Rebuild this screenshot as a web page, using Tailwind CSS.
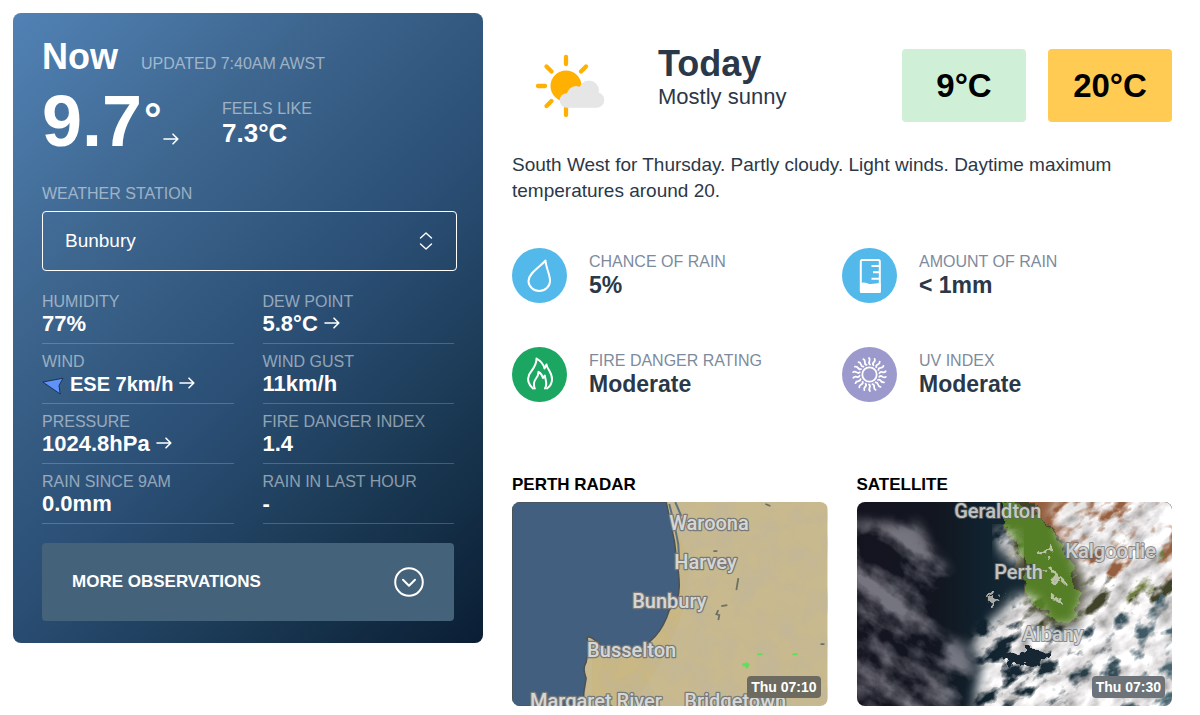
<!DOCTYPE html>
<html lang="en">
<head>
    <meta charset="UTF-8">
    <meta name="viewport" content="width=device-width, initial-scale=1.0">
    <title>Bunbury Weather</title>
    <script src="https://cdn.jsdelivr.net/npm/@tailwindcss/browser@4"></script>
</head>
<body class="bg-white font-['Liberation_Sans',Arial,sans-serif] text-[#2b3848]">
    <!-- Shared icons -->
    <svg class="hidden">
        <symbol id="steady" viewBox="0 0 16 12">
            <path d="M1 6h13.5M10 1.2L14.8 6L10 10.8" fill="none" stroke="currentColor" stroke-width="1.6" stroke-linecap="round" stroke-linejoin="round"/>
        </symbol>
    </svg>

    <main class="grid grid-cols-[470fr_660fr] items-start gap-[29px] pt-[13px] pl-[13px] pr-7">
        <!-- Current conditions -->
        <section class="rounded-lg bg-[linear-gradient(135deg,#5182b5_0%,#3c648c_30%,#2a4e74_55%,#1b3a55_75%,#0a1e33_100%)] px-[29px] pt-6 pb-[22px] text-white">
            <div class="flex items-baseline gap-[23px]">
                <h2 class="text-[36px] leading-10 font-bold">Now</h2>
                <p class="text-base leading-5 text-white/50">UPDATED 7:40AM AWST</p>
            </div>

            <div class="mt-2 flex items-center">
                <div class="flex w-[180px]">
                    <span class="text-[72px] leading-[72px] font-bold">9.7</span>
                    <span class="ml-0.5 text-[44px] leading-[68px] font-bold">°</span>
                    <svg class="mb-3 h-3 w-[18px] self-end"><use href="#steady"/></svg>
                </div>
                <div class="pt-1">
                    <p class="text-base leading-5 text-white/50">FEELS LIKE</p>
                    <p class="text-[26px] leading-7 font-bold">7.3°C</p>
                </div>
            </div>

            <label for="station" class="mt-[27px] block text-base leading-5 text-white/50">WEATHER STATION</label>
            <div class="relative mt-[7px] -mr-[3px]">
                <select id="station" class="h-[60px] w-full appearance-none rounded border border-white bg-transparent px-[22px] text-[19px] text-white">
                    <option>Bunbury</option>
                </select>
                <svg class="pointer-events-none absolute top-[21px] right-6 h-[18px] w-[14px]" viewBox="0 0 14 18" fill="none" stroke="white" stroke-width="1.4" stroke-linecap="round" stroke-linejoin="round">
                    <path d="M1.5 6L7 1L12.5 6M1.5 12L7 17L12.5 12"/>
                </svg>
            </div>

            <dl class="mt-[13px] grid grid-cols-2 gap-x-[29px]">
                <div class="border-b border-white/20 pt-2 pb-[7px]">
                    <dt class="text-base leading-5 text-white/50">HUMIDITY</dt>
                    <dd class="text-[22px] leading-6 font-bold">77%</dd>
                </div>
                <div class="border-b border-white/20 pt-2 pb-[7px]">
                    <dt class="text-base leading-5 text-white/50">DEW POINT</dt>
                    <dd class="flex items-center gap-1.5 text-[22px] leading-6 font-bold">5.8°C <svg class="mb-0.5 h-3 w-4"><use href="#steady"/></svg></dd>
                </div>
                <div class="border-b border-white/20 pt-2 pb-[7px]">
                    <dt class="text-base leading-5 text-white/50">WIND</dt>
                    <dd class="flex items-center gap-1.5 text-[20px] leading-6 font-bold">
                        <svg class="mt-1 h-[18px] w-[22px]" viewBox="0 0 22 18"><path d="M0.8 5L21 1.2L17 8.5L18.2 17Z" fill="#5f92fb" stroke="#1d3350" stroke-width="1"/></svg>
                        ESE 7km/h
                        <svg class="mb-0.5 h-3 w-4"><use href="#steady"/></svg>
                    </dd>
                </div>
                <div class="border-b border-white/20 pt-2 pb-[7px]">
                    <dt class="text-base leading-5 text-white/50">WIND GUST</dt>
                    <dd class="text-[22px] leading-6 font-bold">11km/h</dd>
                </div>
                <div class="border-b border-white/20 pt-2 pb-[7px]">
                    <dt class="text-base leading-5 text-white/50">PRESSURE</dt>
                    <dd class="flex items-center gap-1.5 text-[22px] leading-6 font-bold">1024.8hPa <svg class="mb-0.5 h-3 w-4"><use href="#steady"/></svg></dd>
                </div>
                <div class="border-b border-white/20 pt-2 pb-[7px]">
                    <dt class="text-base leading-5 text-white/50">FIRE DANGER INDEX</dt>
                    <dd class="text-[22px] leading-6 font-bold">1.4</dd>
                </div>
                <div class="border-b border-white/20 pt-2 pb-[7px]">
                    <dt class="text-base leading-5 text-white/50">RAIN SINCE 9AM</dt>
                    <dd class="text-[22px] leading-6 font-bold">0.0mm</dd>
                </div>
                <div class="border-b border-white/20 pt-2 pb-[7px]">
                    <dt class="text-base leading-5 text-white/50">RAIN IN LAST HOUR</dt>
                    <dd class="text-[22px] leading-6 font-bold">-</dd>
                </div>
            </dl>

            <button class="mt-[19px] flex h-[78px] w-full items-center justify-between rounded bg-[#45627b] px-[30px] text-[17px] font-bold">
                MORE OBSERVATIONS
                <svg class="size-[30px]" viewBox="0 0 30 30" fill="none" stroke="white" stroke-width="2" stroke-linecap="round" stroke-linejoin="round">
                    <circle cx="15" cy="15" r="13.8"/>
                    <path d="M9 12.8L15 18.8L21 12.8"/>
                </svg>
            </button>
        </section>

        <!-- Forecast -->
        <section class="pt-[31px]">
            <div class="flex items-start">
                <svg class="mt-[9px] ml-[22px] h-[66px] w-[72px]" viewBox="0 0 72 66">
                    <path d="M32 4v7M32 55v7M4 33h7M12.500 13.500l5 5M52 13.500l-5 5M12.500 53l5-5" stroke="#ffb000" stroke-width="4.300" stroke-linecap="round"/>
                    <circle cx="32" cy="33" r="15.5" fill="#ffb000"/>
                    <g fill="#e6e6e6">
                        <circle cx="33" cy="47.500" r="7.300"/>
                        <circle cx="42" cy="42" r="9"/>
                        <circle cx="55" cy="37.500" r="10"/>
                        <circle cx="62.500" cy="47" r="7.800"/>
                        <rect x="33" y="40" width="29.500" height="14.800"/>
                    </g>
                </svg>
                <div class="ml-[52px]">
                    <h2 class="text-[36px] leading-10 font-bold">Today</h2>
                    <p class="text-[22px] leading-[26px]">Mostly sunny</p>
                </div>
                <div class="mt-[5px] ml-auto flex gap-[22px] text-[33px] font-bold text-black">
                    <div class="flex h-[73px] w-[124px] items-center justify-center rounded bg-[#cff0d6]">9°C</div>
                    <div class="flex h-[73px] w-[124px] items-center justify-center rounded bg-[#ffcb52]">20°C</div>
                </div>
            </div>

            <p class="mt-[30px] text-[19px] leading-[26px]">South West for Thursday. Partly cloudy. Light winds. Daytime maximum temperatures around 20.</p>

            <dl class="mt-11 grid grid-cols-2 gap-y-11">
                <div class="flex items-center gap-[22px]">
                    <svg class="size-[55px] shrink-0" viewBox="0 0 55 55" fill="none" stroke="white" stroke-width="2" stroke-linejoin="round">
                        <circle cx="27.500" cy="27.500" r="27.500" fill="#53b8ea" stroke="none"/>
                        <path d="M33.500 12.500C28 19 16.500 25 16.500 33A10.500 9.800 0 0 0 38 33C38.200 27 34 20 33.500 12.500Z"/>
                    </svg>
                    <div>
                        <dt class="text-base leading-[18px] text-[#7d8b9c]">CHANCE OF RAIN</dt>
                        <dd class="text-[23px] leading-7 font-bold">5%</dd>
                    </div>
                </div>
                <div class="flex items-center gap-[22px]">
                    <svg class="size-[55px] shrink-0" viewBox="0 0 55 55" fill="none" stroke="white" stroke-width="2" stroke-linejoin="round">
                        <circle cx="27.500" cy="27.500" r="27.500" fill="#53b8ea" stroke="none"/>
                        <rect x="18.800" y="12" width="19" height="32" rx="1.500"/>
                        <path d="M29.500 18h8M31 24.300h6.500M29.500 30.800h8"/>
                        <path d="M19 36c4-2 6 1 10 1s5-1 8.800-1v8h-18.800z" fill="white"/>
                    </svg>
                    <div>
                        <dt class="text-base leading-[18px] text-[#7d8b9c]">AMOUNT OF RAIN</dt>
                        <dd class="text-[23px] leading-7 font-bold">&lt; 1mm</dd>
                    </div>
                </div>
                <div class="flex items-center gap-[22px]">
                    <svg class="size-[55px] shrink-0" viewBox="0 0 55 55" fill="none" stroke="white" stroke-width="2" stroke-linejoin="round" stroke-linecap="round">
                        <circle cx="27.500" cy="27.500" r="27.500" fill="#1ba761" stroke="none"/>
                        <path d="M21 41.500C17 38 15 33 17 28C19 23.500 25 19 24.500 11.500C29 14 31.500 17 32.500 21.500L34.500 17.500C35 22 40 25 40 32C40 36 38 39.500 35 41.500"/>
                        <path d="M22.800 41.500C21 37 22 34 24 31.500C26 29 26.500 27 26.500 24.800C29.500 26.500 30.500 29 31 31L32.800 28.500C33 31.500 36 37 33 41.500"/>
                    </svg>
                    <div>
                        <dt class="text-base leading-[18px] text-[#7d8b9c]">FIRE DANGER RATING</dt>
                        <dd class="text-[23px] leading-7 font-bold">Moderate</dd>
                    </div>
                </div>
                <div class="flex items-center gap-[22px]">
                    <svg class="size-[55px] shrink-0" viewBox="0 0 55 55" fill="none" stroke="white" stroke-width="1.800" stroke-linecap="round">
                        <circle cx="27.500" cy="27.500" r="27.500" fill="#9c9acd" stroke="none"/>
                        <circle cx="27.500" cy="27.500" r="7.200"/>
                        <g id="uv-rays"></g>
                    </svg>
                    <div>
                        <dt class="text-base leading-[18px] text-[#7d8b9c]">UV INDEX</dt>
                        <dd class="text-[23px] leading-7 font-bold">Moderate</dd>
                    </div>
                </div>
            </dl>

            <!-- Maps -->
            <div class="mt-[71px] grid grid-cols-2 gap-[29px]">
                <a href="#" class="block">
                    <h3 class="text-[17px] leading-6 font-bold text-black">PERTH RADAR</h3>
                    <div class="relative mt-[5px] overflow-hidden rounded-lg">
                        <svg class="block w-full" viewBox="0 0 315 204">
                            <defs>
                                <filter id="terrain" x="0" y="0" width="100%" height="100%">
                                    <feTurbulence type="fractalNoise" baseFrequency="0.045" numOctaves="4" seed="4"/>
                                    <feColorMatrix values="0 0 0 0 0.50  0 0 0 0 0.46  0 0 0 0 0.36  3 0 0 0 -1.300"/>
                                </filter>
                            </defs>
                            <rect width="315" height="204" fill="#c8b98f"/>
                            <path d="M166 30Q180 60 172 100T120 204H80V155L140 150Z" fill="#c9b57d" opacity="0.6"/>
                            <rect x="70" width="245" height="204" filter="url(#terrain)" opacity="0.4"/>
                            <path d="M154 0Q157 14 159 24Q163 40 164 55Q167 72 167 84Q167 100 157 108Q152 124 143 134Q132 146 121 149Q98 152 85 140Q79 134 75 135Q77 148 74 160Q70 166 74 176Q71 190 71 204H0V0Z" fill="#425f80" stroke="#4d5153" stroke-width="1.500"/>
                            <path d="M157 2L162 22L166 42L167 60M163 0L169 14" fill="none" stroke="#5d7480" stroke-width="2"/>
                            <path d="M226 76L225 82L224 88M209 104l6-1M206 108l-2 4l3 1l-1 5M253 2l5 2M201 49h4M308 142h4" fill="none" stroke="#6d7165" stroke-width="1.800"/>
                            <path d="M230 161h3v-1h2v1h2v3h-1v2h-3v-2h-3zM245 151h5v2h-5zM280 151h5v2h-5z" fill="#5fe05a"/>
                            <g class="font-['Roboto',sans-serif] text-[20px] font-medium" fill="#e4e4e0" fill-opacity="0.9" stroke="#77797a" stroke-width="2.500" paint-order="stroke" stroke-linejoin="round">
                                <text x="157" y="28">Waroona</text>
                                <text x="162" y="67">Harvey</text>
                                <text x="120" y="106">Bunbury</text>
                                <text x="75" y="155">Busselton</text>
                                <text x="18" y="206">Margaret River</text>
                                <text x="172" y="206">Bridgetown</text>
                            </g>
                        </svg>
                        <span class="absolute right-[7px] bottom-2 rounded-sm bg-[#6d6a5f] px-1 text-[14px] leading-[22px] font-bold text-white">Thu 07:10</span>
                    </div>
                </a>
                <a href="#" class="block">
                    <h3 class="text-[17px] leading-6 font-bold text-black">SATELLITE</h3>
                    <div class="relative mt-[5px] overflow-hidden rounded-lg">
                        <svg class="block w-full" viewBox="0 0 315 204">
                            <defs>
                                <linearGradient id="sea">
                                    <stop offset="0" stop-color="#14141f"/>
                                    <stop offset="0.250" stop-color="#12161f"/>
                                    <stop offset="0.400" stop-color="#10222e"/>
                                    <stop offset="0.600" stop-color="#1a2c36"/>
                                    <stop offset="1" stop-color="#4a6874"/>
                                </linearGradient>
                                <filter id="soft"><feGaussianBlur stdDeviation="6"/></filter>
                                <filter id="edge" x="-20%" y="-20%" width="140%" height="140%">
                                    <feTurbulence type="fractalNoise" baseFrequency="0.090" numOctaves="3" seed="8"/>
                                    <feDisplacementMap in="SourceGraphic" scale="20" xChannelSelector="R" yChannelSelector="G"/>
                                </filter>
                                <filter id="cloud" x="0" y="0" width="100%" height="100%">
                                    <feTurbulence type="fractalNoise" baseFrequency="0.038 0.065" numOctaves="6" seed="11"/>
                                    <feColorMatrix values="1.400 0 0 0 0.120  1.400 0 0 0 0.105  1.400 0 0 0 0.105  0 5 0 0 -1.450"/>
                                </filter>
                                <filter id="haze" x="0" y="0" width="100%" height="100%">
                                    <feTurbulence type="fractalNoise" baseFrequency="0.018 0.030" numOctaves="6" seed="5"/>
                                    <feColorMatrix values="0 0 0 0 0.350  0 0 0 0 0.340  0 0 0 0 0.390  0 3.500 0 0 -1.450"/>
                                </filter>
                                <mask id="cloud-area">
                                    <path d="M212 -20H340V230H112L125 160L115 140L160 92L178 96L192 125L218 122L228 85L212 50L192 14Z" fill="white" filter="url(#soft)"/>
                                    <path d="M138 26L160 34L164 62L146 54Z" fill="white" filter="url(#soft)"/>
                                </mask>
                                <mask id="haze-area">
                                    <path d="M0 20L60 20L85 60L110 95L75 120L115 150L118 204V220H-20V20Z" fill="white" filter="url(#soft)"/>
                                </mask>
                            </defs>
                            <rect width="315" height="204" fill="url(#sea)"/>
                            <path d="M146 -20H330V85L270 110L240 118L205 128L165 124L160 105L168 88L155 52L148 20Z" fill="#41422c" filter="url(#edge)"/>
                            <path d="M170 -20H330V75L270 84L232 70L212 44L180 14Z" fill="#96613f" filter="url(#edge)"/>
                            <path d="M142 -6L152 -2L184 18L202 40L218 76L224 98L214 122L194 114L174 98L166 78L174 66L156 44L150 24Z" fill="#557f27" filter="url(#edge)"/>
                            <path d="M270 70L308 50L300 80L260 110Z" fill="#6c7a3c" filter="url(#edge)"/>
                            <g mask="url(#haze-area)" opacity="0.700">
                                <rect x="-80" y="-120" width="440" height="440" transform="rotate(35 60 102)" filter="url(#haze)"/>
                            </g>
                            <g mask="url(#cloud-area)">
                                <rect x="-60" y="-120" width="440" height="440" transform="rotate(-35 157 102)" filter="url(#cloud)"/>
                            </g>
                            <path d="M180 50q10 6 14-4M190 70l16 14M196 92l6 8M132 96l6-6M134 101l4-3" fill="none" stroke="#dcd8cf" stroke-width="4" stroke-linecap="round" opacity="0.750" filter="url(#edge)"/>
                            <path d="M142 152Q170 142 196 150L182 162L150 160Z" fill="#172733" filter="url(#edge)"/>
                            <g class="font-['Roboto',sans-serif] text-[20px] font-medium" fill="#e4e4e0" fill-opacity="0.800" stroke="#5f6468" stroke-opacity="0.700" stroke-width="2" paint-order="stroke" stroke-linejoin="round">
                                <text x="97" y="16">Geraldton</text>
                                <text x="208" y="56">Kalgoorlie</text>
                                <text x="137" y="77">Perth</text>
                                <text x="165" y="139">Albany</text>
                            </g>
                        </svg>
                        <span class="absolute right-[7px] bottom-2 rounded-sm bg-[#6c747a] px-1 text-[14px] leading-[22px] font-bold text-white">Thu 07:30</span>
                    </div>
                </a>
            </div>
        </section>
    </main>

    <script>
        // Wavy rays around the UV sun
        const rays = document.getElementById('uv-rays');
        for (let i = 0; i < 18; i++) {
            const ray = document.createElementNS('http://www.w3.org/2000/svg', 'path');
            ray.setAttribute('d', 'M28 17.500c-3.200-2 1.800-3.800-1-6.500');
            ray.setAttribute('transform', `rotate(${i * 20} 27.5 27.5)`);
            rays.appendChild(ray);
        }
    </script>
</body>
</html>
